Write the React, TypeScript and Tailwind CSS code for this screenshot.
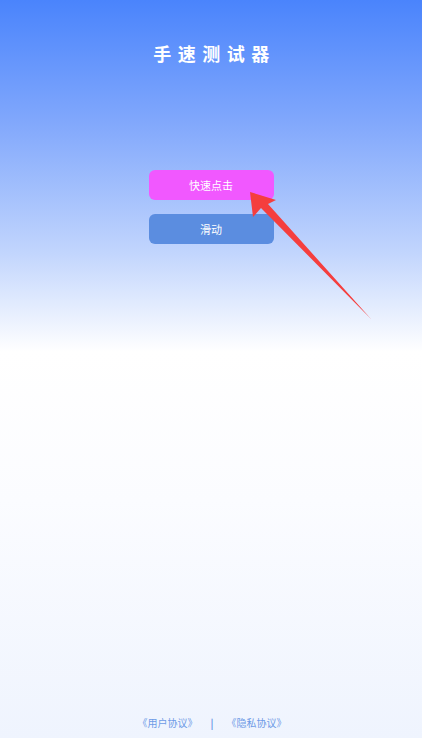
export default function App() {
  return (
    <div
      className="relative flex h-[738px] w-[422px] flex-col items-center overflow-hidden bg-[linear-gradient(180deg,#4a84fc_0px,#80a7fc_120px,#c0d4fd_250px,#ffffff_352px,#fbfcff_500px,#eff4fe_738px)]"
      style={{ fontFamily: '"Noto Sans CJK SC", "Noto Sans", sans-serif' }}
    >
      {/* Title */}
      <h1 className="mt-[40px] pl-[7px] text-[18px] leading-[26px] font-bold tracking-[6.5px] text-white">
        手速测试器
      </h1>

      {/* Mode buttons */}
      <div className="mt-[104px] flex flex-col gap-[14px]">
        <button className="h-[30px] w-[125px] rounded-[6px] bg-[#f158ff] text-[11px] text-white">
          快速点击
        </button>
        <button className="h-[30px] w-[125px] rounded-[6px] bg-[#5b8de0] text-[11px] text-white">
          滑动
        </button>
      </div>

      {/* Red pointer arrow */}
      <svg
        className="absolute left-0 top-0"
        width="422"
        height="738"
        viewBox="0 0 422 738"
      >
        <path
          d="M250 192 L276 200 L268 204 L371 319 L261 208 L253 217 Z"
          fill="#f53e3e"
        />
      </svg>

      {/* Footer links */}
      <div className="mt-auto mb-[8px] flex items-center gap-[13px] pl-[2px] text-[10px] leading-[14px] text-[#6d9ae6]">
        <span>《用户协议》</span>
        <span className="font-bold">|</span>
        <span>《隐私协议》</span>
      </div>
    </div>
  );
}
